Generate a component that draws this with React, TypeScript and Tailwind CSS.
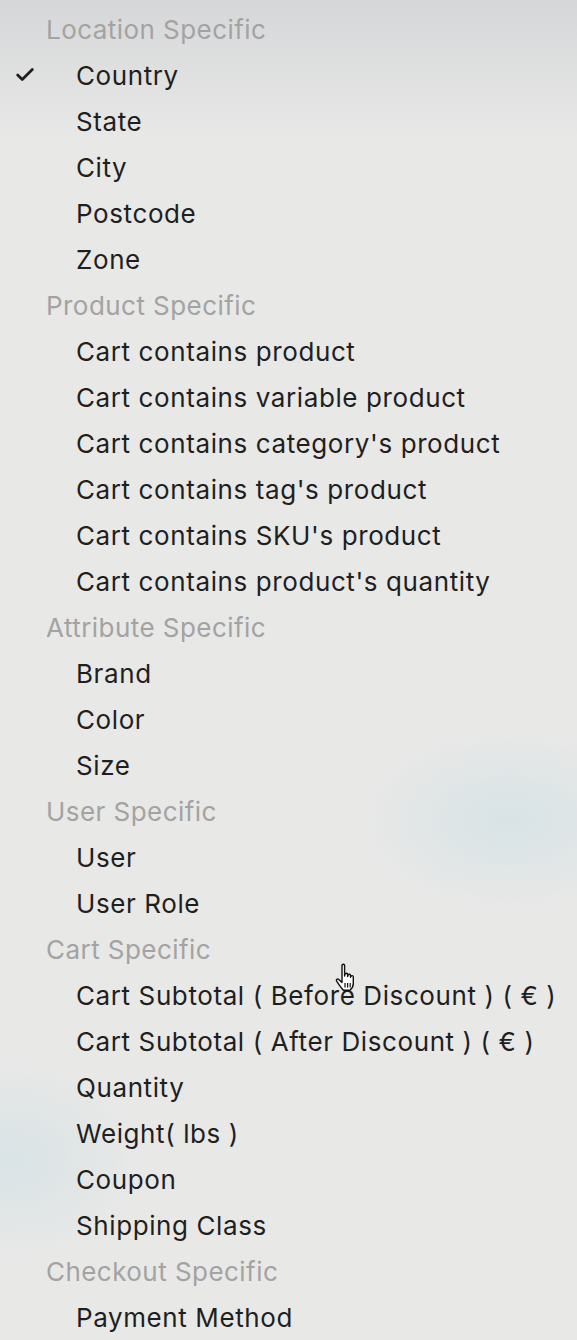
import { Check } from 'lucide-react'

type Group = { title: string; items: string[] }

const groups: Group[] = [
  { title: 'Location Specific', items: ['Country', 'State', 'City', 'Postcode', 'Zone'] },
  {
    title: 'Product Specific',
    items: [
      'Cart contains product',
      'Cart contains variable product',
      "Cart contains category's product",
      "Cart contains tag's product",
      "Cart contains SKU's product",
      "Cart contains product's quantity",
    ],
  },
  { title: 'Attribute Specific', items: ['Brand', 'Color', 'Size'] },
  { title: 'User Specific', items: ['User', 'User Role'] },
  {
    title: 'Cart Specific',
    items: [
      'Cart Subtotal ( Before Discount ) ( € )',
      'Cart Subtotal ( After Discount ) ( € )',
      'Quantity',
      'Weight( lbs )',
      'Coupon',
      'Shipping Class',
    ],
  },
  { title: 'Checkout Specific', items: ['Payment Method'] },
]

function HandCursor() {
  return (
    <svg width="30" height="34" viewBox="0 0 30 34" className="absolute left-[334px] top-[962px]">
      <path
        d="M8 3.5c0-1.6 2.6-1.6 2.6 0V14l.4-1.8c.4-1.5 2.6-1.3 2.6.3v2l.4-1.3c.4-1.4 2.5-1.2 2.5.3v1.8l.4-.9c.5-1.2 2.4-.9 2.4.5v6.6c0 3-1.6 5.3-3.4 6.8H9.4c-1.3-1.5-3.2-3.8-4.6-5.9L2.6 19.2c-.9-1.4.9-2.8 2.1-1.700L8 20.4z"
        fill="#fff"
        stroke="#111"
        strokeWidth="1.4"
        strokeLinejoin="round"
      />
      <path d="M11 21v4.5M13.6 21v4.5M16.2 21v4.5" stroke="#111" strokeWidth="1.2" />
    </svg>
  )
}

export default function App() {
  return (
    <div
      className="relative w-[577px] h-[1340px] overflow-hidden bg-[#e8e8e7] pt-[6px]"
      style={{ fontFamily: 'Inter, "Noto Sans", sans-serif' }}
    >
      {/* background tints */}
      <div className="absolute inset-x-0 top-0 h-[140px] bg-gradient-to-b from-[#d6d7d9] to-[#e8e8e7]" />
      <div className="absolute left-[360px] top-[730px] w-[300px] h-[180px] rounded-full bg-[radial-gradient(closest-side,#d8e3e6,#e8e8e700)]" />
      <div className="absolute left-[-120px] top-[1060px] w-[260px] h-[200px] rounded-full bg-[radial-gradient(closest-side,#d9e3e6,#e8e8e700)]" />

      <div className="relative flex flex-col">
        {groups.map((g) => (
          <div key={g.title} className="flex flex-col">
            <div className="h-[46px] flex items-center pl-[46px] text-[26px] text-[#a3a3a3] tracking-[0.45px]">
              {g.title}
            </div>
            {g.items.map((item) => (
              <div key={item} className="relative h-[46px] flex items-center pl-[76px] text-[26px] text-[#1f1f1f] tracking-[0.6px]">
                {item === 'Country' && (
                  <Check className="absolute left-[14px] w-[22px] h-[22px] text-[#1f1f1f]" strokeWidth={3} />
                )}
                {item}
              </div>
            ))}
          </div>
        ))}
      </div>

      <HandCursor />
    </div>
  )
}
